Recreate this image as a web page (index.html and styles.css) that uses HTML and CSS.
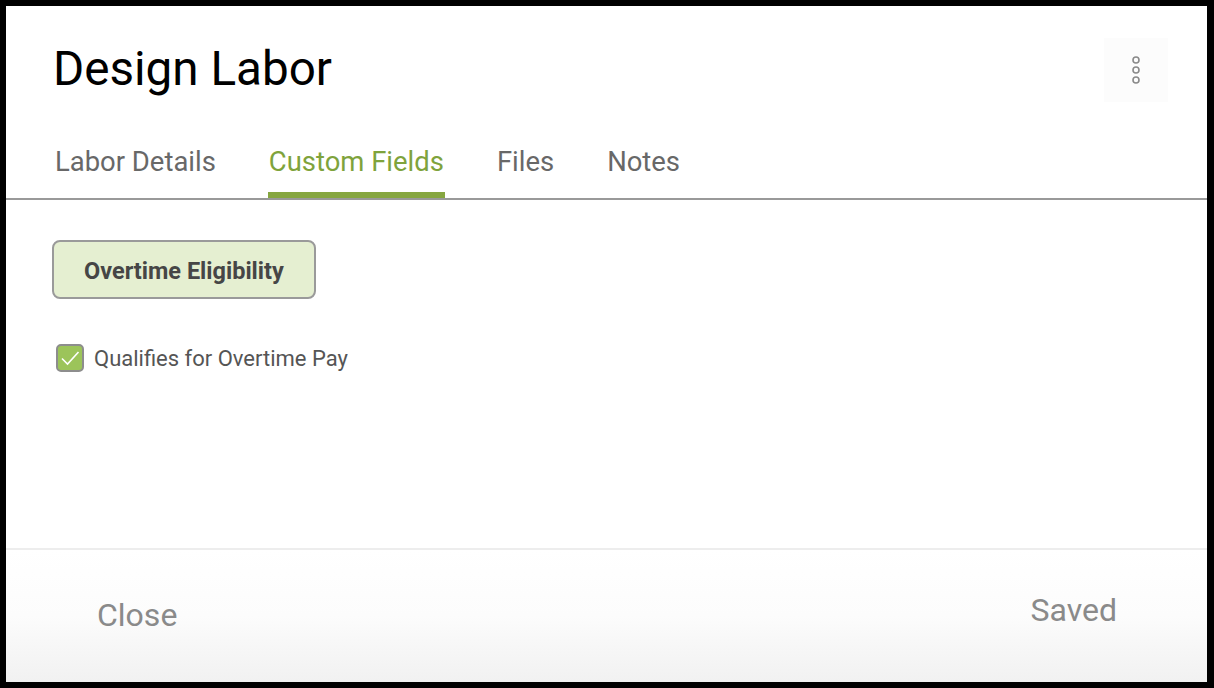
FILE: index.html
```html
<!DOCTYPE html>
<html>
<head>
<meta charset="utf-8">
<link rel="stylesheet" href="styles.css">
</head>
<body>
<div class="frame">
  <div class="header">
    <h1 class="title">Design Labor</h1>
    <button class="kebab" aria-label="More">
      <svg width="14" height="32" viewBox="0 0 14 32">
        <circle cx="7" cy="6" r="3" fill="none" stroke="#8a8a8a" stroke-width="1.6"/>
        <circle cx="7" cy="16" r="3" fill="none" stroke="#8a8a8a" stroke-width="1.6"/>
        <circle cx="7" cy="26" r="3" fill="none" stroke="#8a8a8a" stroke-width="1.6"/>
      </svg>
    </button>
  </div>
  <div class="tabs">
    <div class="tab">Labor Details</div>
    <div class="tab active">Custom Fields</div>
    <div class="tab">Files</div>
    <div class="tab">Notes</div>
  </div>
  <div class="content">
    <div class="group-btn">Overtime Eligibility</div>
    <label class="check-row">
      <span class="checkbox">
        <svg width="20" height="16" viewBox="0 0 20 16"><path d="M2 8.5 L7.5 14 L18.5 2" fill="none" stroke="#fff" stroke-width="1.6"/></svg>
      </span>
      <span class="check-label">Qualifies for Overtime Pay</span>
    </label>
  </div>
  <div class="footer">
    <span class="close">Close</span>
    <span class="saved">Saved</span>
  </div>
</div>
</body>
</html>
```

FILE: styles.css
```css
html, body {
  margin: 0;
  padding: 0;
  background: #000;
}
body {
  font-family: Roboto, "Liberation Sans", Arial, sans-serif;
}
.frame {
  margin: 6px 7px 6px 6px;
  width: 1201px;
  height: 676px;
  background: #fff;
  display: flex;
  flex-direction: column;
}
.header {
  box-sizing: border-box;
  height: 90px;
  display: flex;
  justify-content: space-between;
  align-items: flex-start;
  padding: 36px 39px 0 47px;
}
.title {
  margin: 0;
  font-size: 47.6px;
  line-height: 54px;
  font-weight: 400;
  color: #000;
}
.kebab {
  margin-top: -4px;
  width: 64px;
  height: 64px;
  border: none;
  background: #fcfcfc;
  display: flex;
  align-items: center;
  justify-content: center;
  padding: 0;
  flex-shrink: 0;
}
.tabs {
  display: flex;
  gap: 51px;
  margin-top: 50px;
  padding-left: 48px;
  border-bottom: 2px solid #999;
}
.tab {
  font-size: 27.45px;
  line-height: 32px;
  color: #686868;
  padding: 0 1px 14px;
  border-bottom: 6px solid transparent;
}
.tab.active {
  color: #7fa33c;
  border-bottom-color: #86a640;
}
.content {
  flex: 1;
  padding: 40px 46px 0;
}
.group-btn {
  display: inline-block;
  box-sizing: border-box;
  height: 59px;
  padding: 3px 30px 0;
  line-height: 52px;
  font-size: 23.5px;
  font-weight: 700;
  color: #464646;
  background: #e5efd1;
  border: 2px solid #9a9a9a;
  border-radius: 8px;
}
.check-row {
  display: flex;
  align-items: center;
  margin-top: 45px;
  margin-left: 4px;
}
.checkbox {
  box-sizing: border-box;
  width: 28px;
  height: 28px;
  background: #9cc45a;
  border: 2px solid #8d8d8d;
  border-radius: 5px;
  display: flex;
  align-items: center;
  justify-content: center;
}
.check-label {
  margin-left: 10px;
  font-size: 22px;
  line-height: 26px;
  color: #555;
  padding-top: 1px;
}
.footer {
  height: 132px;
  border-top: 2px solid #ededed;
  background: linear-gradient(#fff 0%, #fcfcfc 50%, #f1f1f1 100%);
  display: flex;
  justify-content: space-between;
  align-items: flex-start;
  padding: 0 90px 0 91px;
}
.close, .saved {
  font-size: 32px;
  line-height: 38px;
  color: #8a8a8a;
}
.close {
  margin-top: 46px;
}
.saved {
  margin-top: 41px;
}
```
